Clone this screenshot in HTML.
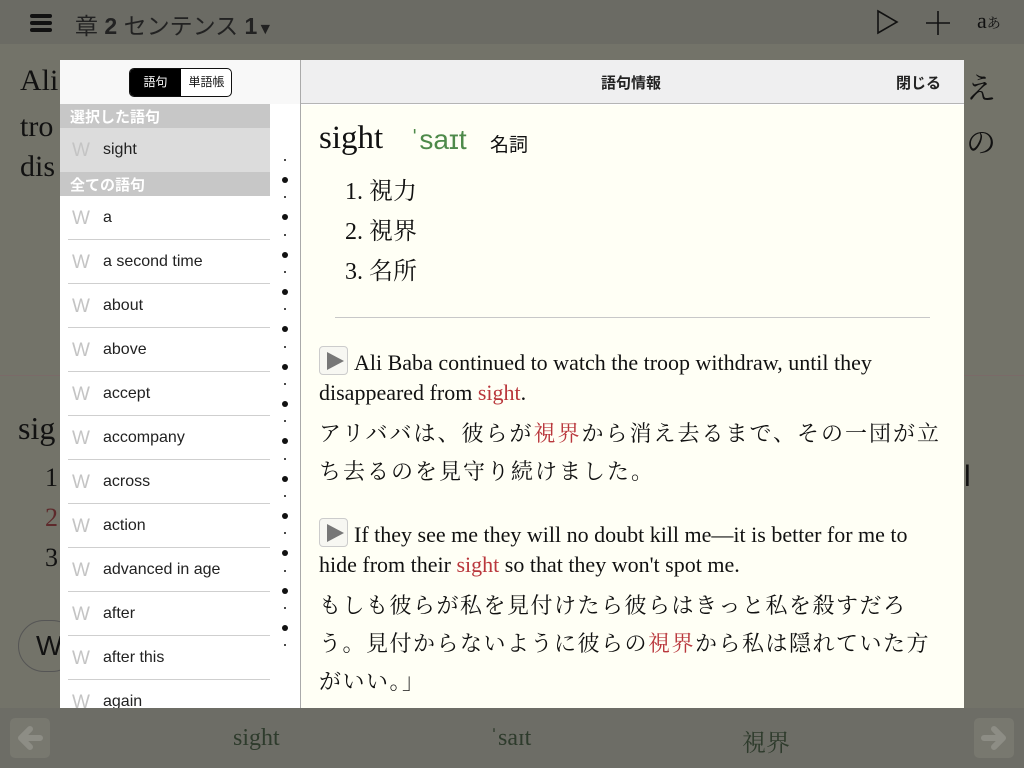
<!DOCTYPE html>
<html><head><meta charset="utf-8"><style>
*{margin:0;padding:0;box-sizing:border-box}
body{width:1024px;height:768px;overflow:hidden;background:#737369;position:relative;font-family:"Liberation Sans","Noto Sans CJK JP",sans-serif}
.a{position:absolute;white-space:nowrap}
.serif{font-family:"Liberation Serif","Noto Serif CJK SC",serif}
.jp{font-family:"Liberation Serif","Noto Serif CJK SC",serif}
.row{position:absolute;left:0;width:240px;height:44px}
.row .w{position:absolute;left:12px;top:12px;font-size:19px;color:#c4c4c4;font-weight:300}
.row .t{position:absolute;left:43px;top:13px;font-size:16px;color:#222}
.row .ln{position:absolute;left:8px;right:30px;bottom:0;height:1px;background:#cfcfcf}
.red{color:#b9373c}
.pb{display:inline-block;width:29px;height:29px;border:1px solid #ccc;border-radius:4px;background:#f7f7f2;vertical-align:-5px;position:relative;margin-right:6px}
.pb:after{content:"";position:absolute;left:7px;top:5px;border-left:17px solid #777;border-top:9px solid transparent;border-bottom:9px solid transparent}
</style></head><body>
<div class="a" style="left:0;top:0;width:1024px;height:44px;background:#6b6b64"></div>
<div class="a" style="left:30px;top:14px;width:22px;height:4px;background:#111;border-radius:2px"></div>
<div class="a" style="left:30px;top:21px;width:22px;height:4px;background:#111;border-radius:2px"></div>
<div class="a" style="left:30px;top:28px;width:22px;height:4px;background:#111;border-radius:2px"></div>
<div class="a" style="left:75px;top:7px;font-size:23px;color:#222">章 <b>2</b> センテンス <b>1</b><span style="font-size:16px">▼</span></div>
<svg class="a" style="left:876px;top:9px" width="24" height="26"><path d="M2 2 L21 13 L2 24 Z" fill="none" stroke="#111" stroke-width="1.6"/></svg>
<svg class="a" style="left:925px;top:10px" width="26" height="26"><path d="M13 1V25M1 13H25" stroke="#111" stroke-width="1.6"/></svg>
<div class="a serif" style="left:977px;top:8px;font-size:22px;color:#111">a<span style="font-size:14px">あ</span></div>
<div class="a serif" style="left:20px;top:64px;font-size:30px;color:#111">Ali</div>
<div class="a serif" style="left:20px;top:110px;font-size:30px;color:#111">tro</div>
<div class="a serif" style="left:20px;top:150px;font-size:30px;color:#111">dis</div>
<div class="a jp" style="left:966px;top:64px;font-size:30px;color:#111">え</div>
<div class="a jp" style="left:966px;top:118px;font-size:30px;color:#111">の</div>
<div class="a" style="left:0;top:375px;width:1024px;height:1px;background:#7a6a68"></div>
<div class="a serif" style="left:18px;top:410px;font-size:32px;color:#111">sig</div>
<div class="a serif" style="left:45px;top:463px;font-size:26px;color:#111">1</div>
<div class="a serif" style="left:45px;top:503px;font-size:26px;color:#5e2a2c">2</div>
<div class="a serif" style="left:45px;top:543px;font-size:26px;color:#111">3</div>
<div class="a" style="left:18px;top:620px;width:60px;height:52px;border:1px solid #555;border-radius:26px"></div>
<div class="a" style="left:36px;top:630px;font-size:28px;color:#111">W</div>
<div class="a" style="left:964px;top:460px;font-size:30px;color:#111">l</div>
<div class="a" style="left:0;top:708px;width:1024px;height:60px;background:#6d6d66"></div>
<div class="a" style="left:10px;top:718px;width:40px;height:40px;background:#78786f;border-radius:5px"></div>
<svg class="a" style="left:10px;top:718px" width="40" height="40"><path d="M30 20H12M20 11L11 20L20 29" fill="none" stroke="#8d8d85" stroke-width="6" stroke-linecap="round" stroke-linejoin="round"/></svg>
<div class="a" style="left:974px;top:718px;width:40px;height:40px;background:#78786f;border-radius:5px"></div>
<svg class="a" style="left:974px;top:718px" width="40" height="40"><path d="M10 20H28M20 11L29 20L20 29" fill="none" stroke="#8d8d85" stroke-width="6" stroke-linecap="round" stroke-linejoin="round"/></svg>
<div class="a serif" style="left:233px;top:725px;font-size:24px;color:#2e3b2c">sight</div>
<div class="a serif" style="left:490px;top:725px;font-size:24px;color:#2e3b2c">ˈsaɪt</div>
<div class="a jp" style="left:742px;top:723px;font-size:24px;color:#2e3b2c">視界</div>
<div class="a" style="left:60px;top:60px;width:904px;height:648px;background:#fff;overflow:hidden">
  <div class="a" style="left:0;top:0;width:240px;height:44px;background:#f8f8f8"></div>
  <div class="a" style="left:69px;top:8px;width:103px;height:29px;border:1px solid #111;border-radius:5px;overflow:hidden;background:#fff">
    <div class="a" style="left:0;top:0;width:51px;height:29px;background:#000;color:#fff;font-size:12px;text-align:center;line-height:27px">語句</div>
    <div class="a" style="left:51px;top:0;width:51px;height:29px;color:#111;font-size:12px;text-align:center;line-height:27px">単語帳</div>
  </div>
  <div class="a" style="left:0;top:44px;width:210px;height:24px;background:#c7c7c7;color:#fff;font-size:15px;font-weight:bold;padding:2px 10px">選択した語句</div>
  <div class="a" style="left:0;top:68px;width:210px;height:44px;background:#dcdcdc"><div class="row" style="top:0"><span class="w">W</span><span class="t">sight</span></div></div>
  <div class="a" style="left:0;top:112px;width:210px;height:24px;background:#c7c7c7;color:#fff;font-size:15px;font-weight:bold;padding:2px 10px">全ての語句</div>
  <div class="a" style="left:0;top:136px;width:240px;height:520px">
    <div class="row" style="top:0"><span class="w">W</span><span class="t">a</span><span class="ln"></span></div>
    <div class="row" style="top:44px"><span class="w">W</span><span class="t">a second time</span><span class="ln"></span></div>
    <div class="row" style="top:88px"><span class="w">W</span><span class="t">about</span><span class="ln"></span></div>
    <div class="row" style="top:132px"><span class="w">W</span><span class="t">above</span><span class="ln"></span></div>
    <div class="row" style="top:176px"><span class="w">W</span><span class="t">accept</span><span class="ln"></span></div>
    <div class="row" style="top:220px"><span class="w">W</span><span class="t">accompany</span><span class="ln"></span></div>
    <div class="row" style="top:264px"><span class="w">W</span><span class="t">across</span><span class="ln"></span></div>
    <div class="row" style="top:308px"><span class="w">W</span><span class="t">action</span><span class="ln"></span></div>
    <div class="row" style="top:352px"><span class="w">W</span><span class="t">advanced in age</span><span class="ln"></span></div>
    <div class="row" style="top:396px"><span class="w">W</span><span class="t">after</span><span class="ln"></span></div>
    <div class="row" style="top:440px"><span class="w">W</span><span class="t">after this</span><span class="ln"></span></div>
    <div class="row" style="top:484px"><span class="w">W</span><span class="t">again</span></div>
  </div>
  <svg class="a" style="left:210px;top:0" width="30" height="648">
    <g fill="#111">
      <circle cx="15" cy="100" r="1"/><circle cx="15" cy="120" r="3"/>
      <circle cx="15" cy="137" r="1"/><circle cx="15" cy="157" r="3"/>
      <circle cx="15" cy="175" r="1"/><circle cx="15" cy="195" r="3"/>
      <circle cx="15" cy="212" r="1"/><circle cx="15" cy="232" r="3"/>
      <circle cx="15" cy="249" r="1"/><circle cx="15" cy="269" r="3"/>
      <circle cx="15" cy="287" r="1"/><circle cx="15" cy="307" r="3"/>
      <circle cx="15" cy="324" r="1"/><circle cx="15" cy="344" r="3"/>
      <circle cx="15" cy="361" r="1"/><circle cx="15" cy="381" r="3"/>
      <circle cx="15" cy="399" r="1"/><circle cx="15" cy="419" r="3"/>
      <circle cx="15" cy="436" r="1"/><circle cx="15" cy="456" r="3"/>
      <circle cx="15" cy="473" r="1"/><circle cx="15" cy="493" r="3"/>
      <circle cx="15" cy="511" r="1"/><circle cx="15" cy="531" r="3"/>
      <circle cx="15" cy="548" r="1"/><circle cx="15" cy="568" r="3"/>
      <circle cx="15" cy="585" r="1"/>
    </g>
  </svg>
  <div class="a" style="left:240px;top:0;width:1px;height:648px;background:#aaa"></div>
  <div class="a" style="left:241px;top:0;width:663px;height:44px;background:#efeff0;border-bottom:1px solid #b5b5b5"></div>
  <div class="a" style="left:541px;top:12px;font-size:15px;font-weight:bold;color:#222">語句情報</div>
  <div class="a" style="left:836px;top:12px;font-size:15px;font-weight:bold;color:#222">閉じる</div>
  <div class="a" style="left:241px;top:45px;width:663px;height:603px;background:#fffff5"></div>
  <div class="a serif" style="left:259px;top:60px;font-size:33px;color:#111">sight</div>
  <div class="a" style="left:350px;top:64px;font-size:28px;color:#4e8a4a">ˈsaɪt</div>
  <div class="a" style="left:430px;top:70px;font-size:19px;color:#111">名詞</div>
  <div class="a jp" style="left:285px;top:112px;font-size:24px;color:#111;line-height:40px">1. 視力<br>2. 視界<br>3. 名所</div>
  <div class="a" style="left:275px;top:257px;width:595px;height:1px;background:#c8c8c8"></div>
  <div class="a serif" style="left:259px;top:286px;width:630px;font-size:22px;line-height:30px;color:#111;white-space:normal"><span class="pb"></span>Ali Baba continued to watch the troop withdraw, until they disappeared from <span class="red">sight</span>.</div>
  <div class="a jp" style="left:259px;top:355px;width:630px;font-size:22px;line-height:38px;color:#111;white-space:normal;letter-spacing:2px">アリババは、彼らが<span class="red">視界</span>から消え去るまで、その一団が立ち去るのを見守り続けました。</div>
  <div class="a serif" style="left:259px;top:458px;width:625px;font-size:22px;line-height:30px;color:#111;white-space:normal"><span class="pb"></span>If they see me they will no doubt kill me—it is better for me to hide from their <span class="red">sight</span> so that they won't spot me.</div>
  <div class="a jp" style="left:259px;top:527px;width:640px;font-size:22px;line-height:38px;color:#111;white-space:normal;letter-spacing:1.5px">もしも彼らが私を見付けたら彼らはきっと私を殺すだろ<br>う。見付からないように彼らの<span class="red">視界</span>から私は隠れていた方<br>がいい。」</div>
</div>
</body></html>
